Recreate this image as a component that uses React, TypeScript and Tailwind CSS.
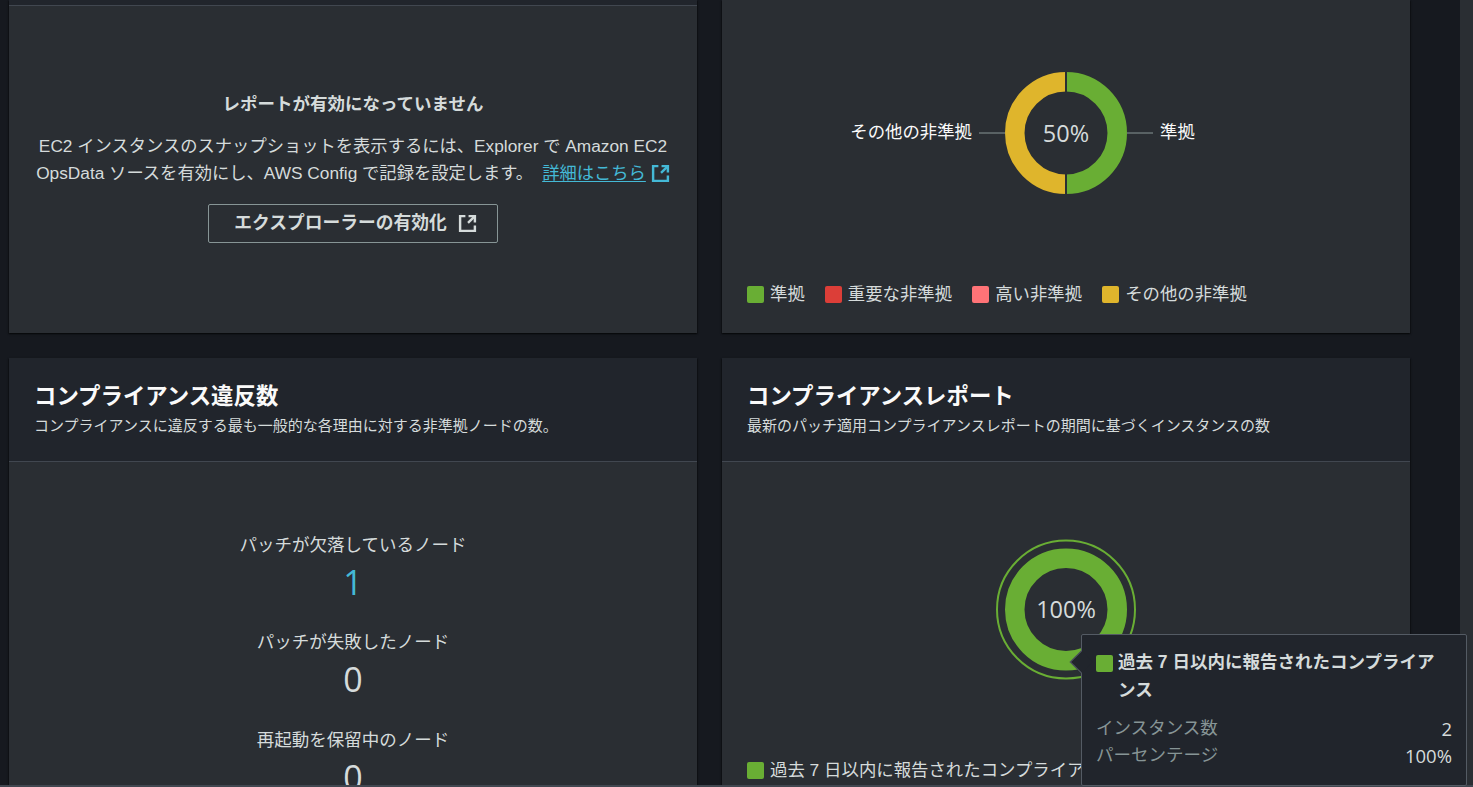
const font = "font-['Liberation_Sans','Noto_Sans_CJK_JP',sans-serif]";
const digits = "font-['Open_Sans',sans-serif]";

function ExternalIcon({ className }: { className: string }) {
  return (
    <svg viewBox="0 0 18 18" fill="none" stroke="currentColor" strokeWidth="2.3" className={className}>
      <path d="M7 2H2V16H16V11" />
      <path d="M10 2H16V8" />
      <path d="M15.5 2.5L9.5 8.5" />
    </svg>
  );
}

function Swatch({ color }: { color: string }) {
  return <span className="h-[17px] w-[17px] shrink-0 rounded-[2px]" style={{ backgroundColor: color }} />;
}

function LegendItem({ color, label }: { color: string; label: string }) {
  return (
    <div className="flex shrink-0 items-center gap-[6px] whitespace-nowrap">
      <Swatch color={color} />
      <span>{label}</span>
    </div>
  );
}

function Card({ children }: { children: React.ReactNode }) {
  return (
    <section className="flex min-w-0 flex-col bg-[#2a2e33] shadow-[0_1px_2px_0_rgba(0,0,0,0.5),1px_1px_1px_0_rgba(0,0,0,0.2),-1px_1px_1px_0_rgba(0,0,0,0.2)]">
      {children}
    </section>
  );
}

function CardHeader({ title, sub }: { title: string; sub: string }) {
  return (
    <header className="h-[104px] border-b border-[#414750] bg-[#21252c] px-[25px] pt-[22px]">
      <h2 className="text-[22.4px] leading-[33px] font-bold text-[#fafafa]">{title}</h2>
      <p className="mt-[2px] text-[15px] leading-[21px] text-[#d5dbdb]">{sub}</p>
    </header>
  );
}

function Stat({ label, value, highlight }: { label: string; value: string; highlight?: boolean }) {
  return (
    <div className="flex h-[97.3px] shrink-0 flex-col items-center">
      <div className="text-[17.5px] leading-[26px] text-[#d5dbdb]">{label}</div>
      <div className={`mt-[2px] text-[34px] leading-[45px] font-normal ${digits} ${highlight ? "text-[#44b9d6]" : "text-[#d5dbdb]"}`}>
        {value}
      </div>
    </div>
  );
}

export default function App() {
  return (
    <div className={`relative flex h-screen w-full flex-col overflow-hidden bg-[#16191f] ${font}`}>
      <div className="flex min-h-0 flex-1">
        <main className="min-w-0 flex-1 overflow-hidden pl-[9px]">
          <div className="grid w-[1401px] grid-cols-[688px_688px] gap-x-[25px] gap-y-[25px]">
            <Card>
              <div className="h-[6px] border-b border-[#414750] bg-[#21252c]" />
              <div className="flex h-[327px] flex-col items-center pt-[85px] text-center text-[#d5dbdb]">
                <h3 className="text-[17.5px] leading-[26px] font-bold">レポートが有効になっていません</h3>
                <p className="mt-[16px] text-[17.3px] leading-[27px] whitespace-nowrap">
                  EC2 インスタンスのスナップショットを表示するには、Explorer で Amazon EC2
                  <br />
                  OpsData ソースを有効にし、AWS Config で記録を設定します。
                  <a className="ml-[9px] inline-flex items-center gap-[5px] text-[#44b9d6] underline underline-offset-2">
                    詳細はこちら
                    <ExternalIcon className="h-[19px] w-[19px]" />
                  </a>
                </p>
                <button className="mt-[17px] flex h-[39px] w-[290px] items-center justify-center gap-[11px] rounded-[2px] border border-[#879596] pl-[5px] text-[17.75px] font-bold text-[#d5dbdb]">
                  エクスプローラーの有効化
                  <ExternalIcon className="h-[19px] w-[19px]" />
                </button>
              </div>
            </Card>

            <Card>
              <svg viewBox="0 0 688 285" className="h-[285px] w-[688px] shrink-0">
                <path d="M344 81.75A51.25 51.25 0 0 1 344 184.25" fill="none" stroke="#69ae34" strokeWidth="19.5" />
                <path d="M344 81.75A51.25 51.25 0 0 0 344 184.25" fill="none" stroke="#dfb52c" strokeWidth="19.5" />
                <path d="M344 70V196" stroke="#2a2e33" strokeWidth="2" />
                <path d="M257 133H283M405 133H431" stroke="#879596" strokeWidth="1" />
                <text x="344" y="141.5" textAnchor="middle" fontSize="23.5" fill="#d5dbdb" className={digits}>50%</text>
                <text x="250" y="138" textAnchor="end" fontSize="17.4" fill="#fafafa">その他の非準拠</text>
                <text x="438" y="138" fontSize="17.4" fill="#fafafa">準拠</text>
              </svg>
              <div className="flex h-[48px] items-start gap-[20px] px-[25px] text-[17.4px] leading-[18px] text-[#d5dbdb]">
                <LegendItem color="#69ae34" label="準拠" />
                <LegendItem color="#dc3e38" label="重要な非準拠" />
                <LegendItem color="#ff7377" label="高い非準拠" />
                <LegendItem color="#dfb52c" label="その他の非準拠" />
              </div>
            </Card>

            <Card>
              <CardHeader
                title="コンプライアンス違反数"
                sub="コンプライアンスに違反する最も一般的な各理由に対する非準拠ノードの数。"
              />
              <div className="flex h-[360px] flex-col pt-[70px]">
                <Stat label="パッチが欠落しているノード" value="1" highlight />
                <Stat label="パッチが失敗したノード" value="0" />
                <Stat label="再起動を保留中のノード" value="0" />
              </div>
            </Card>

            <Card>
              <CardHeader
                title="コンプライアンスレポート"
                sub="最新のパッチ適用コンプライアンスレポートの期間に基づくインスタンスの数"
              />
              <svg viewBox="0 0 688 299" className="h-[299px] w-[688px] shrink-0">
                <circle cx="344" cy="147.5" r="51.25" fill="none" stroke="#69ae34" strokeWidth="19.5" />
                <circle cx="344" cy="147.5" r="69" fill="none" stroke="#69ae34" strokeWidth="2" />
                <text x="344" y="155.5" textAnchor="middle" fontSize="23.5" fill="#d5dbdb" className={digits}>100%</text>
              </svg>
              <div className="flex px-[25px] text-[17.4px] leading-[18px] text-[#d5dbdb]">
                <LegendItem color="#69ae34" label="過去 7 日以内に報告されたコンプライアンス" />
              </div>
            </Card>
          </div>
        </main>
        <div className="w-[13px] shrink-0 bg-[#2a2e33]" />
      </div>
      <footer className="h-[2px] shrink-0 bg-[#414750]" />

      <div className="absolute top-[634px] left-[1081px] h-[152px] w-[386px] rounded-[2px] border border-[#545b64] bg-[#21252c] px-[14px] pt-[13px]">
        <div className="absolute top-[19px] left-[-9px] h-[16px] w-[16px] rotate-45 border-b border-l border-[#545b64] bg-[#21252c]" />
        <div className="flex gap-[5px]">
          <span className="mt-[7px] h-[17px] w-[17px] shrink-0 rounded-[2px] bg-[#69ae34]" />
          <div className="w-[325px] text-[17.5px] leading-[28px] font-bold text-[#d5dbdb]">
            過去 7 日以内に報告されたコンプライアンス
          </div>
        </div>
        <div className="mt-[11px] flex justify-between text-[17.5px] leading-[27px]">
          <span className="text-[#879596]">インスタンス数</span>
          <span className={`text-[18.5px] text-[#d5dbdb] ${digits}`}>2</span>
        </div>
        <div className="flex justify-between text-[17.5px] leading-[27px]">
          <span className="text-[#879596]">パーセンテージ</span>
          <span className={`text-[18.5px] text-[#d5dbdb] ${digits}`}>100%</span>
        </div>
      </div>
    </div>
  );
}
